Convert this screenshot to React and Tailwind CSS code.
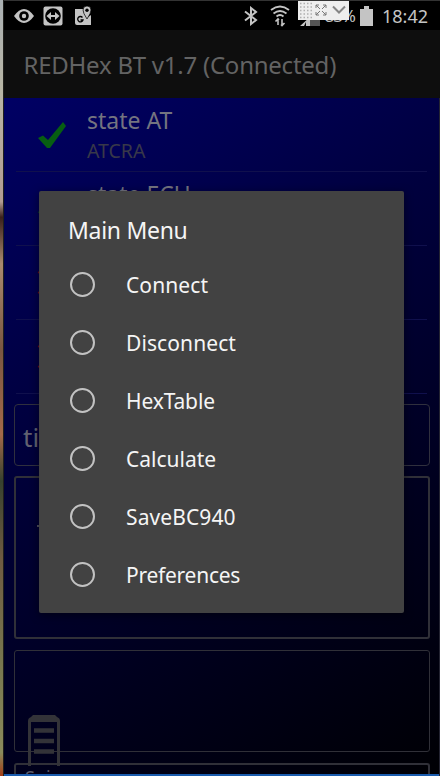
import React from 'react';

const menuItems = [
  { label: 'Connect', className: 'tracking-[0.1px]' },
  { label: 'Disconnect', className: 'tracking-[0.1px]' },
  { label: 'HexTable', className: 'tracking-[-0.15px]' },
  { label: 'Calculate', className: 'tracking-normal' },
  { label: 'SaveBC940', className: 'tracking-[0.1px]' },
  { label: 'Preferences', className: 'tracking-[-0.25px]' }
];

const StatusBar = () => (
  <header className="h-[30px] shrink-0 bg-black border-t border-[#333] flex items-center justify-between pl-[10px] pr-[12px] text-[#c4c4c4]">
    <div className="flex items-center gap-[9px]">
      <svg className="w-[20px] h-[20px]" viewBox="0 0 20 20">
        <path d="M0 10Q10-4 20 10Q10 24 0 10Z" fill="currentColor" />
        <circle cx="10" cy="10" r="4.8" fill="#000" />
        <circle cx="10" cy="10" r="2.2" fill="currentColor" />
      </svg>
      <svg className="w-[20px] h-[20px]" viewBox="0 0 20 20">
        <rect x="0.5" y="0.5" width="19" height="19" rx="2" fill="currentColor" />
        <circle cx="10" cy="10" r="7.8" fill="#000" />
        <path d="M3.5 10L8 6V9H12V6L16.5 10L12 14V11H8V14Z" fill="currentColor" />
      </svg>
      <svg className="w-[20px] h-[20px] ml-[1px]" viewBox="0 0 18 20">
        <path d="M1 3H9Q9 7 13 12L17 9V19H3Q1 19 1 17Z" fill="currentColor" />
        <path d="M13 0Q9 0 9 4Q9 7 13 13Q17 7 17 4Q17 0 13 0Z" fill="currentColor" stroke="#000" strokeWidth="0.7" />
        <circle cx="13" cy="4.3" r="1.7" fill="#000" />
        <path d="M8.500 11.500A2.700 2.700 0 1 0 9 14H6.500" stroke="#000" strokeWidth="1.300" fill="none" />
      </svg>
    </div>
    <div className="flex items-center">
      <svg className="w-[14px] h-[20px] mr-[12px]" viewBox="0 0 14 20">
        <path d="M1 5.500L12 14L7 18V2L12 6L1 14.500" fill="none" stroke="currentColor" strokeWidth="2" />
      </svg>
      <svg className="w-[20px] h-[22px] mr-[9px]" viewBox="0 0 20 22">
        <g fill="none" stroke="currentColor" strokeWidth="1.800">
          <path d="M1 5Q10-2 19 5M3.500 8.500Q10 3.500 16.500 8.500M6.500 11.500Q10 8.500 13.500 11.500" />
          <path d="M8 20V14M5.500 16.500L8 14L9 15M12 14V20.500M14.500 18L12 20.500L11 19.500" strokeWidth="1.600" />
        </g>
      </svg>
      <div className="relative w-[56px] h-[29px] mr-[5px] flex items-end justify-end">
        <svg className="absolute left-[1px] bottom-[4px] w-[20px] h-[18px]" viewBox="0 0 20 18">
          <path d="M10 0H20V18H10Z" fill="#555" />
          <path d="M0 18L10 9V18H6V14L4 18Z" fill="currentColor" />
        </svg>
        <span className="text-[17px] leading-[28px] tracking-[-1px]">83%</span>
        <div className="absolute left-[-1px] top-0 w-[51px] h-[19px] bg-[#eeeeee] flex items-center">
          <svg className="w-[51px] h-[19px]" viewBox="0 0 51 19" fill="none">
            <path d="M2 2.500H14M2 6H14M2 9.500H14M2 13H14M2 16.500H14" stroke="#b0b0b0" strokeWidth="1.500" strokeDasharray="1.500 2" />
            <path d="M18 7V4H21M18 4L22 8M28 7V4H25M28 4L24 8M18 11V14H21M18 14L22 10M28 11V14H25M28 14L24 10" stroke="#777" strokeWidth="1" />
            <path d="M35 5.500L41 11.500L47 5.500" stroke="#858585" strokeWidth="2" />
          </svg>
        </div>
      </div>
      <svg className="w-[13px] h-[20px] mr-[9px]" viewBox="0 0 13 20">
        <path d="M0 3H4V0H9V3H13V20H0Z" fill="currentColor" />
      </svg>
      <span className="text-[18px] leading-[28px]">18:42</span>
    </div>
  </header>
);

const CheckIcon = () => (
  <svg className="w-[30px] h-[29px]" viewBox="0 0 30 29">
    <path d="M1 18L6 15.500L11 20L26 2L29 6L13 28L10 28Z" fill="#075e12" />
  </svg>
);

const CrossIcon = () => (
  <svg className="w-[30px] h-[29px]" viewBox="0 0 30 29">
    <path d="M2 3L27 26M27 3L2 26" stroke="#6a0c1c" strokeWidth="4" />
  </svg>
);

const StateRow = ({ title, value, icon }) => (
  <div className="h-[74px] shrink-0 mx-[12px] border-b border-[#10104d] flex">
    <div className="w-[71px] pt-[22px] pl-[21px]">{icon}</div>
    <div className="whitespace-nowrap">
      <div className="text-[23px] leading-[30px] mt-[7px] text-[#747480]">{title}</div>
      <div className="text-[19.5px] leading-[26px] mt-[3px] text-[#383849]">{value}</div>
    </div>
  </div>
);

const MenuDialog = () => (
  <section className="absolute left-[39px] top-[191px] w-[365px] h-[422px] rounded-[2px] bg-[#424242] text-[#f5f5f5] flex flex-col shadow-[0_2px_8px_rgba(0,0,0,0.500)]">
    <h2 className="pl-[29px] pt-[22px] h-[65px] text-[23px] leading-[34px] tracking-[-0.3px]">Main Menu</h2>
    {menuItems.map((item) => (
      <label key={item.label} className="h-[58px] pl-[31px] flex items-center">
        <span className="w-[25px] h-[25px] mr-[31px] mb-[2px] border-[2.5px] border-[#c2c2c2] rounded-full" />
        <span className={`text-[21px] leading-[30px] ${item.className}`}>{item.label}</span>
      </label>
    ))}
  </section>
);

export default function App() {
  return (
    <main className="relative w-[440px] h-[776px] overflow-hidden flex bg-black font-['Noto_Sans',sans-serif]">
      <div className="w-[4px] shrink-0 border-r border-[#20201c] bg-[linear-gradient(#aab0b3_0%,#b8b5a5_12%,#b29c92_26%,#3b211c_28%,#a98a6e_34%,#7a5742_45%,#a3694a_56%,#37422f_62%,#6f5b42_72%,#77764f_85%,#8a8a5c_97%,#a33c16_100%)]" />
      <div className="w-[436px] h-[776px] shrink-0 flex flex-col">
        <StatusBar />
        <div className="h-[68px] shrink-0 bg-[#0e0e0e] pl-[19.5px] pt-[1px] flex items-center text-[24px] tracking-[-0.24px] text-[#636363] whitespace-nowrap">
          REDHex BT v1.7 (Connected)
        </div>
        <div className="h-[678px] shrink-0 flex flex-col border-r border-[#242432] bg-[linear-gradient(148deg,#000064_0%,#00003c_38%,#000020_67%,#000004_100%)]">
          <StateRow title="state AT" value="ATCRA" icon={<CheckIcon />} />
          <StateRow title="state ECU" icon={<CheckIcon />} />
          <StateRow icon={<CrossIcon />} />
          <StateRow icon={<CrossIcon />} />
          <div className="h-[62px] shrink-0 mt-[10px] ml-[10px] mr-[9px] rounded-[4px] border border-[#30303e] pl-[8px] text-[26px] leading-[64px] text-[#626270]">ti</div>
          <div className="h-[163px] shrink-0 mt-[10px] ml-[10px] mr-[9px] rounded-[3px] border-2 border-[#303038] pt-[47px] pl-[21px]">
            <div className="w-[20px] h-[2px] bg-[#50505c]" />
          </div>
          <div className="h-[102px] shrink-0 mt-[11px] ml-[10px] mr-[9px] rounded-[3px] border border-[#303038]" />
          <div className="h-[11px] shrink-0 mt-[11px] ml-[10px] mr-[9px] overflow-hidden rounded-t-[3px] border-2 border-b-0 border-[#303038] pl-[9px] text-[18px] leading-[24px] text-[#5a5a68]">Spinner</div>
          <div className="h-[2px] shrink-0 bg-[#1a5cae]" />
        </div>
      </div>
      <svg className="absolute left-[28px] top-[715px] w-[32px] h-[51px]" viewBox="0 0 32 51">
        <path d="M0 51V6Q0 3 3 2L5 0H27L29 2Q32 3 32 6V51H29V7H3V51Z" fill="#333338" />
        <path d="M6 15.500H26M6 26H26M6 36.500H26" stroke="#333338" strokeWidth="4.500" />
      </svg>
      <MenuDialog />
    </main>
  );
}
